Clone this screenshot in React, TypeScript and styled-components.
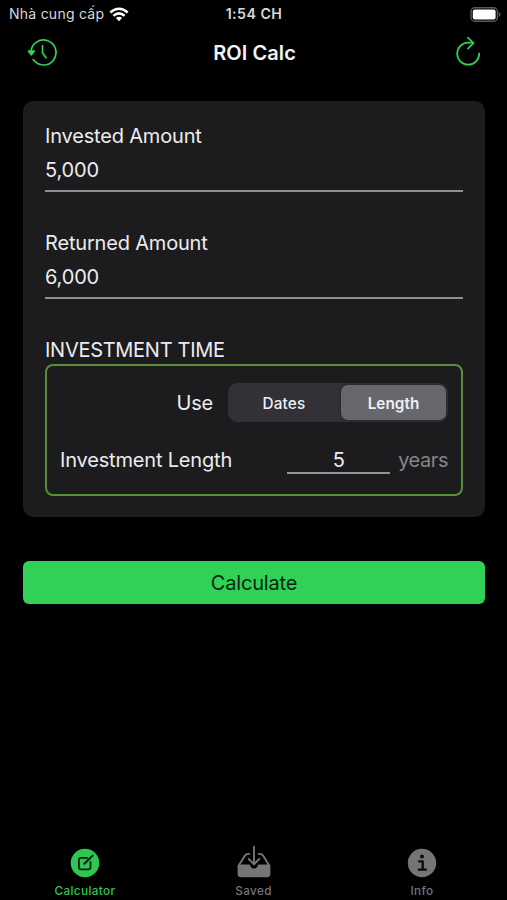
import React, { useState } from "react";
import styled, { createGlobalStyle } from "styled-components";

const GlobalStyle = createGlobalStyle`
  * { box-sizing: border-box; }
  body { margin: 0; background: #000; }
  button, input { font: inherit; color: inherit; letter-spacing: inherit; border: 0; padding: 0; background: none; border-radius: 0; outline: none; }
`;

const Screen = styled.div`
  width: 507px;
  height: 900px;
  display: flex;
  flex-direction: column;
  background: #000;
  color: #ececee;
  font-family: Inter, "Liberation Sans", sans-serif;
  font-size: 20px;
  letter-spacing: -0.18px;
  overflow: hidden;
`;

const StatusBar = styled.header`
  height: 28px;
  display: grid;
  grid-template-columns: 1fr auto 1fr;
  align-items: center;
  padding: 0 6px 0 9px;
  font-size: 14px;
  line-height: 28px;
  color: #d8d8d8;
`;

const Carrier = styled.div`
  display: flex;
  align-items: center;
  gap: 5px;
  letter-spacing: 0.25px;
`;

const Clock = styled.div`
  margin-right: 2px;
  font-size: 14.2px;
  font-weight: 600;
  letter-spacing: 0.45px;
`;

const BatterySlot = styled.div`
  display: flex;
  justify-content: flex-end;
`;

const NavBar = styled.nav`
  height: 48px;
  display: flex;
  align-items: center;
  justify-content: space-between;
  padding: 0 24px 0 26px;
`;

const IconButton = styled.button`
  width: 32px;
  height: 32px;
  display: flex;
  align-items: center;
  justify-content: center;
  color: #31d158;
`;

const Title = styled.h1`
  margin: 0;
  padding-top: 1px;
  font-size: 20px;
  font-weight: 600;
  letter-spacing: 0.08px;
  color: #f4f4f4;
`;

const Content = styled.main`
  flex: 1;
  padding: 25px 22px 0 23px;
`;

const Card = styled.section`
  height: 416px;
  padding: 18px 22px 0;
  border-radius: 10px;
  background: #1c1c1e;
`;

const Field = styled.label`
  display: flex;
  flex-direction: column;
  height: 106.6px;
  line-height: 34px;
`;

const FieldLabel = styled.span`
  height: 34px;
`;

const FieldInput = styled.input`
  width: 100%;
  height: 39px;
  padding-bottom: 3px;
  border-bottom: 2px solid #8f8f91;
  letter-spacing: -0.15px;
`;

const GroupTitle = styled.h2`
  margin: 0;
  height: 31.8px;
  font-size: 20px;
  font-weight: 400;
  line-height: 36px;
  letter-spacing: -0.28px;
`;

const Group = styled.div`
  height: 132px;
  padding: 17px 13px 0 12px;
  border: 2px solid #578f37;
  border-radius: 8px;
`;

const ModeRow = styled.div`
  display: flex;
  align-items: center;
  justify-content: flex-end;
  gap: 15px;
  line-height: 39px;
`;

const ModeLabel = styled.span`
  padding-top: 1px;
`;

const Segmented = styled.div`
  display: grid;
  grid-template-columns: 1fr 1fr;
  width: 220px;
  height: 39px;
  padding: 2px;
  border-radius: 9px;
  background: #313136;
`;

const Segment = styled.button<{ $active: boolean }>`
  margin-left: ${(p) => (p.$active ? 3 : 0)}px;
  padding-top: 2px;
  border-radius: 7px;
  background: ${(p) => (p.$active ? "#67676e" : "transparent")};
  box-shadow: ${(p) => (p.$active ? "0 0 3px rgba(0,0,0,.3)" : "none")};
  color: #f0f0f2;
  font-size: 15.3px;
  font-weight: ${(p) => (p.$active ? 600 : 500)};
  letter-spacing: ${(p) => (p.$active ? 0.05 : 0.2)}px;
  line-height: 33px;
`;

const LengthRow = styled.div`
  display: flex;
  align-items: flex-start;
  margin-top: 19px;
  padding-left: 1px;
  line-height: 36px;
`;

const LengthInput = styled.input`
  width: 103px;
  height: 32px;
  margin-left: auto;
  border-bottom: 2px solid #959597;
  padding-top: 7px;
  text-align: center;
`;

const Unit = styled.span`
  margin-left: 8px;
  color: #858588;
  letter-spacing: -0.45px;
`;

const CalculateButton = styled.button`
  display: block;
  width: 100%;
  height: 43px;
  margin-top: 44px;
  border-radius: 6px;
  background: #31d158;
  color: #06250d;
`;

const TabBar = styled.footer`
  height: 58px;
  display: grid;
  grid-template-columns: 170px 167px 170px;
`;

const Tab = styled.button<{ $active?: boolean }>`
  display: flex;
  flex-direction: column;
  align-items: center;
  color: ${(p) => (p.$active ? "#2fc654" : "#757577")};
  font-size: 11.7px;
  font-weight: 500;
  letter-spacing: 0.4px;
  line-height: 16px;
`;

const TabIcon = styled.span`
  display: flex;
  height: 41px;
`;

const WifiIcon = () => (
  <svg width="20" height="15" viewBox="0 0 20 15">
    <g fill="none" stroke="#fff" strokeWidth="2.5">
      <path d="M1.3 5.5Q10-2.1 18.7 5.5" />
      <path d="M4.4 8.8Q10 4 15.6 8.8" />
    </g>
    <path d="M6.9 11Q10 8.4 13.1 11L10 14.2Z" fill="#fff" />
  </svg>
);

const BatteryIcon = () => (
  <svg width="31" height="15" viewBox="0 0 31 15">
    <rect x="1" y="0.8" width="26.4" height="13.4" rx="3.8" fill="none" stroke="#59595b" strokeWidth="1.4" />
    <rect x="2.8" y="2.6" width="22.8" height="9.8" rx="2" fill="#fff" />
    <path d="M28.7 5Q30.6 5.7 30.6 7.5T28.7 10Z" fill="#59595b" />
  </svg>
);

const HistoryIcon = () => (
  <svg width="32" height="32" viewBox="0 0 32 32" fill="none" stroke="currentColor" strokeWidth="1.7" strokeLinecap="round" strokeLinejoin="round">
    <path d="M5 16A12.5 12.5 0 1 1 7.2 23.6" />
    <path d="M16.5 9.7V16.8L20 21.8" />
    <path d="M2.5 15.2H8.2L5.3 18.8Z" fill="currentColor" />
  </svg>
);

const ReloadIcon = () => (
  <svg width="32" height="32" viewBox="0 0 32 32" fill="none" stroke="currentColor" strokeWidth="1.7" strokeLinecap="round" strokeLinejoin="round">
    <path d="M28.2 17.4A11 11 0 1 1 17.2 6.7H22.2" />
    <path d="M16.9 1.7L22.5 7.1L16.9 12.7" />
  </svg>
);

const ComposeIcon = () => (
  <svg width="30" height="41" viewBox="0 0 30 41">
    <circle cx="15" cy="21" r="14.3" fill="currentColor" />
    <g fill="none" stroke="#06250d" strokeWidth="1.8" strokeLinecap="round" strokeLinejoin="round">
      <path d="M17.3 15.8H10.9Q8.9 15.8 8.9 17.8V25.3Q8.9 27.3 10.9 27.3H18.5Q20.5 27.3 20.5 25.3V19.8" />
      <path d="M14.3 21.8L21 15.2M22.4 13.9L22.6 13.7" strokeWidth="2.1" />
    </g>
  </svg>
);

const TrayIcon = () => (
  <svg width="36" height="41" viewBox="0 0 36 41">
    <path d="M3.2 22.5H12.9Q14.1 22.5 14.4 23.7Q15.2 26.5 18 26.5T21.6 23.7Q21.9 22.5 23.1 22.5H32.8Q34.4 22.5 34.4 24.2V31.8Q34.4 35.3 30.8 35.3H5.2Q1.6 35.3 1.6 31.8V24.2Q1.6 22.5 3.2 22.5Z" fill="currentColor" />
    <g fill="none" stroke="currentColor" strokeWidth="1.9" strokeLinecap="round" strokeLinejoin="round">
      <path d="M2.5 24L8.6 13.9Q9.8 11.9 12.6 11.9H13.4M33.5 24L27.4 13.9Q26.2 11.9 23.4 11.9H22.6" />
      <path d="M18 4.8V22.2M12.8 17L18 22.4L23.2 17" />
    </g>
  </svg>
);

const InfoIcon = () => (
  <svg width="30" height="41" viewBox="0 0 30 41">
    <circle cx="15" cy="21" r="14.2" fill="currentColor" />
    <circle cx="15" cy="14.4" r="2" fill="#0b0b0b" />
    <path d="M12.2 19.3H15.7V27.4M11.7 27.6H19" fill="none" stroke="#0b0b0b" strokeWidth="2.3" strokeLinecap="round" strokeLinejoin="round" />
  </svg>
);

const modes = ["Dates", "Length"];

export default function App() {
  const [mode, setMode] = useState("Length");
  return (
    <>
      <GlobalStyle />
      <Screen>
        <StatusBar>
          <Carrier>
            <span>Nhà cung cấp</span>
            <WifiIcon />
          </Carrier>
          <Clock>1:54 CH</Clock>
          <BatterySlot>
            <BatteryIcon />
          </BatterySlot>
        </StatusBar>
        <NavBar>
          <IconButton aria-label="History"><HistoryIcon /></IconButton>
          <Title>ROI Calc</Title>
          <IconButton aria-label="Reset"><ReloadIcon /></IconButton>
        </NavBar>
        <Content>
          <Card>
            <Field>
              <FieldLabel>Invested Amount</FieldLabel>
              <FieldInput defaultValue="5,000" />
            </Field>
            <Field>
              <FieldLabel>Returned Amount</FieldLabel>
              <FieldInput defaultValue="6,000" />
            </Field>
            <GroupTitle>INVESTMENT TIME</GroupTitle>
            <Group>
              <ModeRow>
                <ModeLabel>Use</ModeLabel>
                <Segmented>
                  {modes.map((m) => (
                    <Segment key={m} $active={m === mode} onClick={() => setMode(m)}>
                      {m}
                    </Segment>
                  ))}
                </Segmented>
              </ModeRow>
              <LengthRow>
                <span>Investment Length</span>
                <LengthInput defaultValue="5" />
                <Unit>years</Unit>
              </LengthRow>
            </Group>
          </Card>
          <CalculateButton>Calculate</CalculateButton>
        </Content>
        <TabBar>
          <Tab $active>
            <TabIcon><ComposeIcon /></TabIcon>
            Calculator
          </Tab>
          <Tab>
            <TabIcon><TrayIcon /></TabIcon>
            Saved
          </Tab>
          <Tab>
            <TabIcon><InfoIcon /></TabIcon>
            Info
          </Tab>
        </TabBar>
      </Screen>
    </>
  );
}
